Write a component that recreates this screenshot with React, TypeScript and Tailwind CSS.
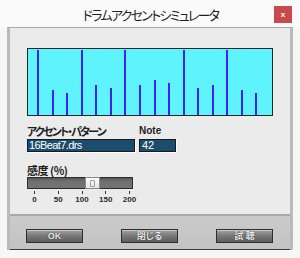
import React from "react";

const tops = [50, 90, 93, 50, 85, 88, 50, 85, 80, 83, 50, 88, 85, 50, 90, 93];
const ticks = ["0", "50", "100", "150", "200"];

function Btn({ label }: { label: string }) {
  return (
    <div className="w-[57px] h-[14px] border border-[#2f2f2f] bg-[linear-gradient(#a4a4a4,#7b7b7b_45%,#5d5d5d)] shadow-[inset_0_1px_0_#c8c8c8] flex items-center justify-center text-[9px] leading-none font-bold text-[#ececec] [text-shadow:0_0_1px_#000]">
      {label}
    </div>
  );
}

export default function App() {
  return (
    <div
      className="w-[300px] h-[258px] bg-[#f6f6f6] flex flex-col overflow-hidden text-[#1e1e1e]"
      style={{ fontFamily: '"Liberation Sans", "Noto Sans CJK JP", sans-serif', fontFeatureSettings: '"palt"' }}
    >
      <div className="h-[27px] relative flex items-center justify-center bg-[#fafafa]">
        <span className="text-[13px] leading-none pt-[1px] tracking-[-1.7px] pl-[1px]" style={{ fontFamily: '"Noto Sans CJK JP", sans-serif' }}>
          ドラムアクセントシミュレータ
        </span>
        <div className="absolute left-[274px] top-[6px] w-[18px] h-[17px] bg-[#c84a4a] flex items-center justify-center text-white text-[8px] font-bold leading-none">
          x
        </div>
      </div>
      <div className="mx-[7px] h-[223px] flex flex-col border-x-[3px] border-[#bababa] border-t border-t-[#a8a8a8]">
        <div className="flex-1 bg-[#ebebeb] pl-[17px] pt-[20px] flex flex-col">
          <svg width="246" height="68" className="block">
            <rect x="0.5" y="0.5" width="245" height="67" fill="#5ff3fe" stroke="#262626" />
            {tops.map((t, i) => {
              const x = Math.round(10.3 + 14.53 * i);
              const y = t - 48;
              return <rect key={i} x={x} y={y} width="2" height={67 - y} fill="#3e24f2" />;
            })}
          </svg>
          <div className="flex mt-[8px] h-[14px] items-center text-[11px] font-bold leading-none">
            <span className="w-[112px] tracking-[-1.8px]" style={{ fontFamily: '"Noto Sans CJK JP", sans-serif' }}>アクセント・パターン</span>
            <span className="text-[10px] font-semibold">Note</span>
          </div>
          <div className="flex mt-[1px] gap-[4px]">
            <div className="w-[108px] h-[13px] bg-[#1d4d6c] border border-[#1a1a1a] shadow-[1px_1px_0_#ffffff] text-white text-[11px] leading-none flex items-center pl-[1px] tracking-[-0.6px]">
              16Beat7.drs
            </div>
            <div className="w-[37px] h-[13px] bg-[#1d4d6c] border border-[#1a1a1a] shadow-[1px_1px_0_#ffffff] text-white text-[11px] leading-none flex items-center pl-[2px]">
              42
            </div>
          </div>
          <div className="mt-[12px] h-[12px] flex items-center text-[11px] font-bold leading-none tracking-[-0.5px]" style={{ fontFamily: '"Noto Sans CJK JP", sans-serif' }}>
            感度 (%)
          </div>
          <div className="mt-[1px] relative w-[106px] h-[12px] bg-[linear-gradient(#555,#707070_30%,#747474)] border border-[#2b2b2b]">
            <div className="absolute left-[57px] top-[-1px] w-[15px] h-[12px] bg-[linear-gradient(#ffffff,#e3e3e3)] border border-[#8a8a8a] flex items-center justify-center">
              <div className="w-[5px] h-[7px] border border-[#9a9a9a] rounded-[1px]" />
            </div>
          </div>
          <div className="ml-[7px] mt-[2px] w-[96px] flex justify-between">
            {ticks.map((t) => (
              <div key={t} className="w-[1px] flex flex-col items-center">
                <div className="w-[1px] h-[3px] bg-[#333]" />
                <div className="mt-[2px] text-[8px] font-bold leading-none whitespace-nowrap text-[#2a2a2a]">{t}</div>
              </div>
            ))}
          </div>
        </div>
        <div className="h-[2px] bg-[#a9a9a9]" />
        <div className="h-[34px] bg-[linear-gradient(#cbcbcb,#c3c3c3)] border-b border-[#3a3a3a] flex pl-[16px] pt-[13px] gap-[38px]">
          <Btn label="OK" />
          <Btn label="閉じる" />
          <Btn label="試 聴" />
        </div>
      </div>
    </div>
  );
}
